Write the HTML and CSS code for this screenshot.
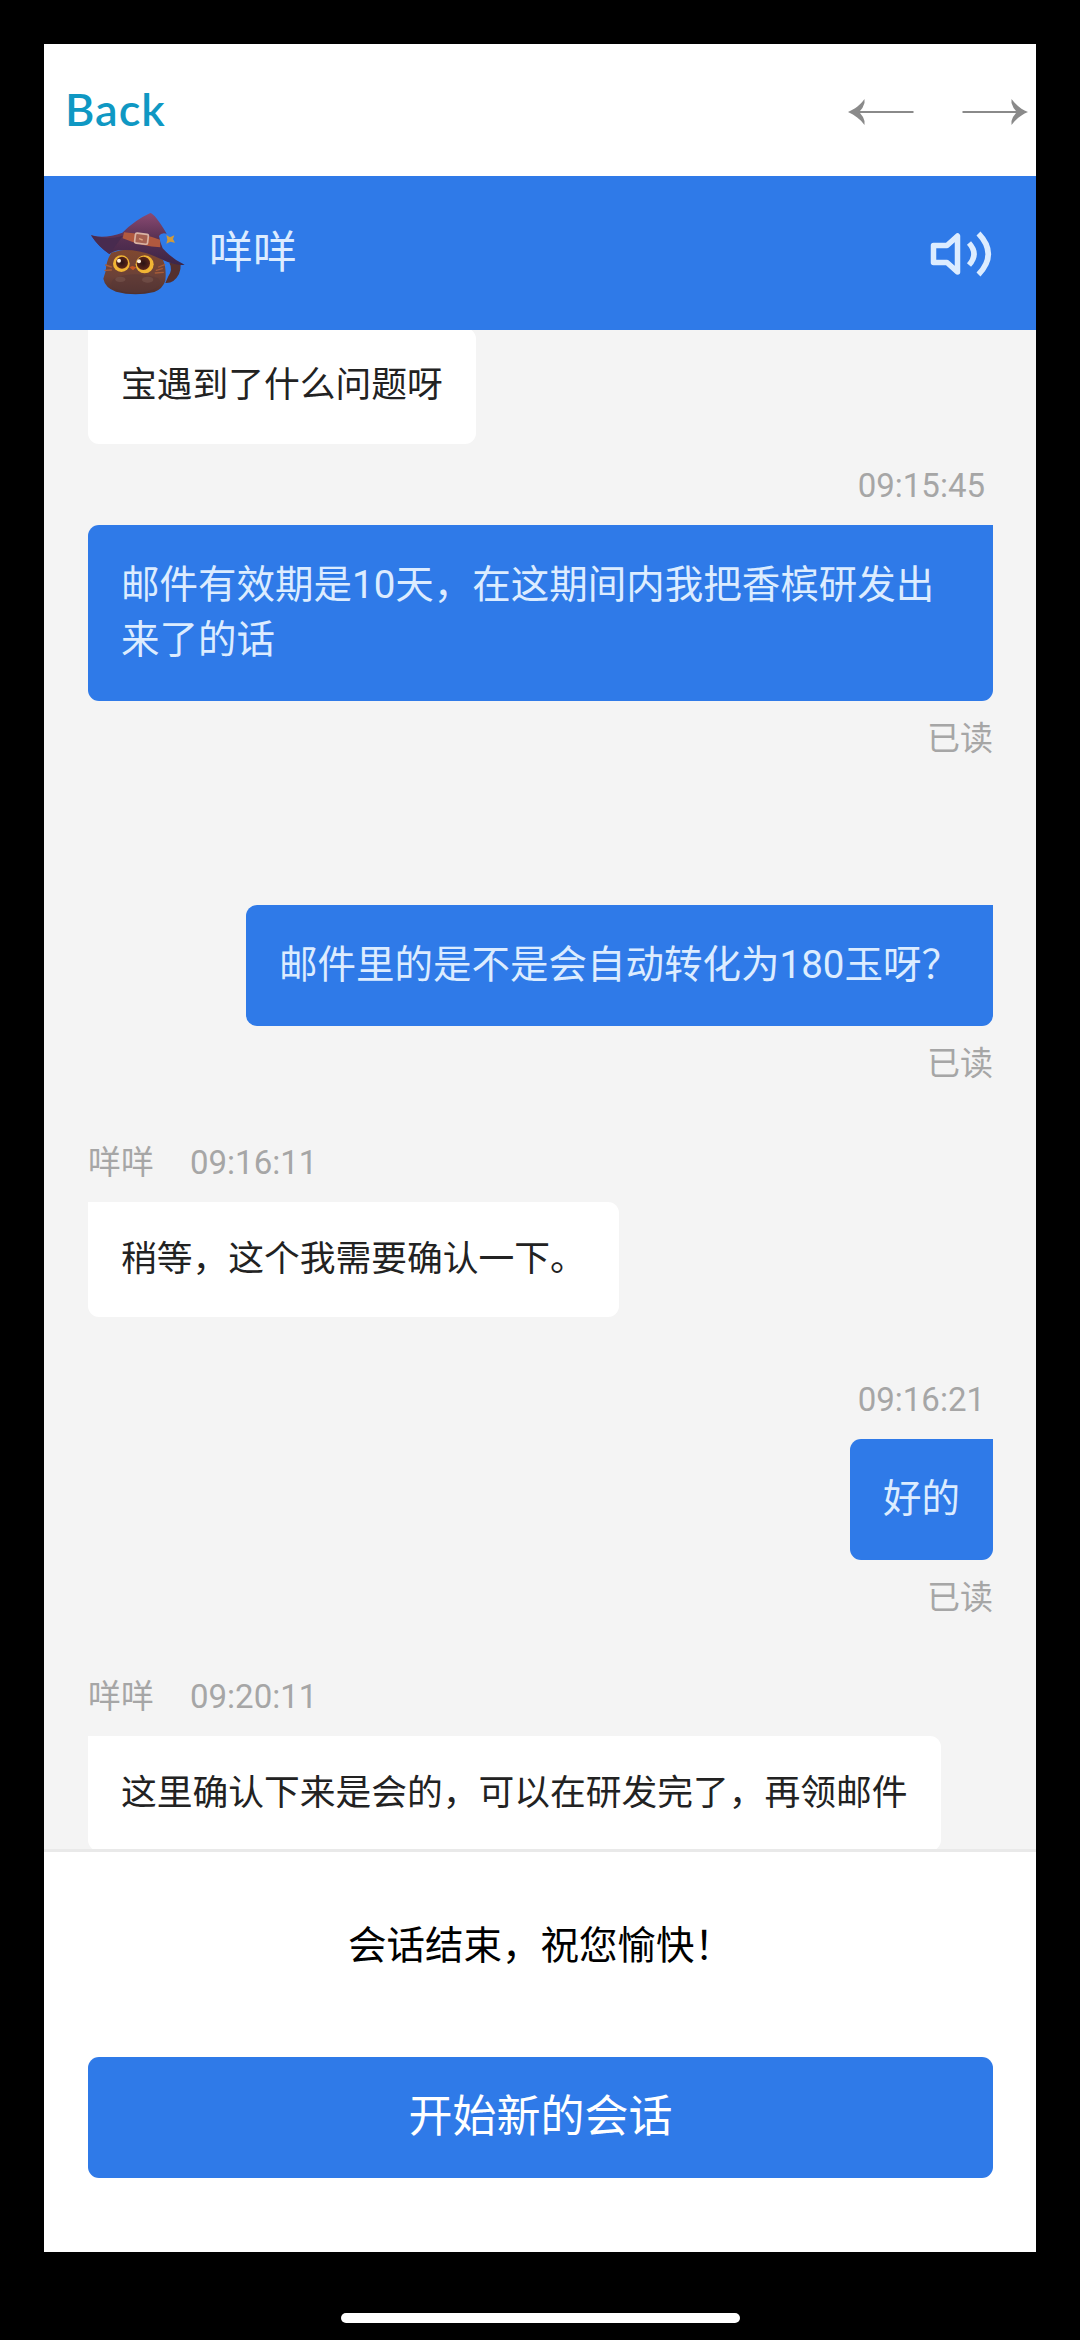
FILE: index.html
```html
<!DOCTYPE html>
<html lang="zh-CN">

<head>
    <meta charset="UTF-8">
    <meta name="viewport" content="width=device-width, initial-scale=1.0">
    <title>咩咩</title>
    <link rel="stylesheet" href="styles.css">
</head>

<body>
    <div class="panel">
        <nav class="topbar">
            <a class="back">Back</a>
            <div class="arrows">
                <svg width="66" height="26" viewBox="0 0 66 26">
                    <path d="M0 13C7 10 12 6 16.500 0V4Q15 9 12 12H65.500V14H12Q15 17 16.500 22V26C12 20 7 16 0 13Z" />
                </svg>
                <svg width="66" height="26" viewBox="0 0 66 26">
                    <path d="M66 13C59 10 54 6 49.500 0V4Q51 9 54 12H.5V14H54Q51 17 49.500 22V26C54 20 59 16 66 13Z" />
                </svg>
            </div>
        </nav>

        <header class="agent">
            <svg class="avatar" viewBox="24 36 300 252">
                <defs>
                    <linearGradient id="hat" x1="0" y1="0" x2="0" y2="1">
                        <stop offset="0" stop-color="#8a4a72" />
                        <stop offset=".5" stop-color="#573052" />
                        <stop offset="1" stop-color="#3c2547" />
                    </linearGradient>
                    <linearGradient id="fur" x1="0" y1="0" x2="0" y2="1">
                        <stop offset="0" stop-color="#80482f" />
                        <stop offset=".6" stop-color="#6b4138" />
                        <stop offset="1" stop-color="#4e302f" />
                    </linearGradient>
                    <radialGradient id="pupil">
                        <stop offset="0" stop-color="#2a1315" />
                        <stop offset="1" stop-color="#5b2619" />
                    </radialGradient>
                </defs>
                <!-- tail -->
                <path d="M268 188Q279 208 265 229L256 249Q282 251 297 222Q303 207 302 192Z" fill="#54302f" />
                <!-- head -->
                <path d="M94 158Q79 181 77 213L70 236Q75 263 108 275Q164 290 223 276Q248 266 256 242Q260 205 249 180Q176 132 94 158Z" fill="url(#fur)" />
                <path d="M103 236Q161 210 235 235Q246 247 236 257Q209 279 164 279Q118 278 98 258Q88 247 103 236Z" fill="#5a3936" opacity=".55" />
                <ellipse cx="121" cy="238" rx="15" ry="8" fill="#806056" opacity=".45" />
                <ellipse cx="203" cy="239" rx="17" ry="9" fill="#806056" opacity=".45" />
                <g fill="none" stroke="#a75c38" stroke-width="4" stroke-linecap="round">
                    <path d="M77 195L94 201M75 211L94 210M229 211L247 206M226 219L250 217M254 194L236 201" />
                </g>
                <!-- eyes -->
                <circle cx="124" cy="191" r="25" fill="#f2b534" />
                <circle cx="126" cy="188" r="18" fill="url(#pupil)" />
                <circle cx="194" cy="193" r="27" fill="#f2b534" />
                <circle cx="190" cy="190" r="20" fill="url(#pupil)" />
                <circle cx="117" cy="182" r="6" fill="#fff1dc" />
                <circle cx="177" cy="184" r="6" fill="#fff1dc" />
                <path d="M148 202L157 198L169 202L159 211Z" fill="#c75623" />
                <!-- hat -->
                <path d="M33 106Q76 117 127 98Q165 60 211 39Q225 42 260 101Q243 97 237 108Q240 128 248 145Q276 177 314 194Q288 199 244 178Q179 145 115 151Q96 156 88 162Q55 140 33 106Z" fill="url(#hat)" />
                <path d="M33 106Q76 122 128 108Q108 136 88 162Q55 140 33 106Z" fill="#482b4f" />
                <path d="M132 97Q190 101 240 119L241 142Q190 141 128 115Z" fill="#b1593f" />
                <rect x="165" y="101" width="39" height="30" rx="5" transform="rotate(7 184 116)" fill="#a56051" stroke="#d9b3a4" stroke-width="5" />
                <path d="M177 116L188 120" stroke="#dda382" stroke-width="4" />
                <path d="M259 105L270 112L283 106L279 117L285 128L271 125L259 131L262 119Z" fill="#d09b3c" />
            </svg>
            <span class="agent-name">咩咩</span>
            <svg class="speaker" width="62" height="48" viewBox="0 0 62 48">
                <path d="M3.500 15.500H17L27.500 6V42L17 32.500H3.500Z" />
                <path d="M39 13Q49 24 39 35M48.500 3.500Q68 24 48.500 44.500" />
            </svg>
        </header>

        <main class="chat">
            <div class="msg msg-first">
                <div class="bubble">宝遇到了什么问题呀</div>
            </div>

            <div class="msg mine">
                <div class="meta"><span>09:15:45</span></div>
                <div class="bubble">邮件有效期是10天，在这期间内我把香槟研发出来了的话</div>
                <div class="status">已读</div>
            </div>

            <div class="msg mine no-meta">
                <div class="bubble">邮件里的是不是会自动转化为180玉呀？</div>
                <div class="status">已读</div>
            </div>

            <div class="msg">
                <div class="meta"><span>咩咩</span><span>09:16:11</span></div>
                <div class="bubble">稍等，这个我需要确认一下。</div>
            </div>

            <div class="msg mine reply">
                <div class="meta"><span>09:16:21</span></div>
                <div class="bubble">好的</div>
                <div class="status">已读</div>
            </div>

            <div class="msg">
                <div class="meta"><span>咩咩</span><span>09:20:11</span></div>
                <div class="bubble">这里确认下来是会的，可以在研发完了，再领邮件</div>
            </div>
        </main>

        <footer class="ended">
            <p>会话结束，祝您愉快！</p>
            <button>开始新的会话</button>
        </footer>
    </div>
    <div class="home-bar"></div>
</body>

</html>
```
FILE: styles.css
```css
* {
    box-sizing: border-box;
}

body {
    margin: 0;
    height: 2340px;
    padding: 44px 44px 17px;
    display: flex;
    flex-direction: column;
    background: #000;
    font-family: Roboto, "Noto Sans CJK SC", sans-serif;
    overflow: hidden;
}

.panel {
    height: 2208px;
    display: flex;
    flex-direction: column;
    background: #fff;
}

/* top bar */

.topbar {
    height: 132px;
    flex: none;
    display: flex;
    align-items: center;
    justify-content: space-between;
    padding: 3px 8px 0 21px;
}

.back {
    margin-bottom: 6px;
    font-family: Lato, sans-serif;
    font-size: 45px;
    font-weight: 600;
    letter-spacing: 1px;
    color: #0f98c3;
}

.arrows {
    display: flex;
    gap: 48px;
}

.arrows svg {
    display: block;
    fill: #8a8a8a;
}

.agent {
    height: 154px;
    flex: none;
    display: flex;
    align-items: center;
    padding: 2px 44px 0;
    background: #2f7ae8;
    color: #dcecff;
}

.avatar {
    width: 100px;
    height: 84px;
}

.agent-name {
    flex: 1;
    margin: 0 0 10px 21px;
    font-size: 44px;
}

.speaker {
    fill: none;
    stroke: #dcecff;
    stroke-width: 5.500;
    stroke-linejoin: round;
}

/* messages */

.chat {
    height: 1519px;
    flex: none;
    padding: 0 43px 0 44px;
    background: #f4f4f4;
    overflow: hidden;
}

.msg {
    display: flex;
    flex-direction: column;
    align-items: flex-start;
    margin-top: 49px;
}

.mine {
    align-items: flex-end;
}

.msg-first {
    margin-top: -2px;
}

.msg-first + .msg {
    margin-top: 16px;
}

.no-meta {
    margin-top: 142px;
}

.reply {
    margin-top: 56.5px;
}

.meta,
.status {
    height: 50px;
    line-height: 52px;
    font-size: 33px;
    color: #a6a6a6;
}

.meta {
    display: flex;
    gap: 36px;
    margin-bottom: 15px;
}

.mine .meta {
    padding-right: 8px;
}

.status {
    margin-top: 12px;
}

.bubble {
    padding: 33px;
    font-size: 35.75px;
    line-height: 49.5px;
    color: #222;
    background: #fff;
    border-radius: 0 11px 11px 11px;
}

.mine .bubble {
    padding: 32px 33px 34px;
    font-size: 38.5px;
    line-height: 55px;
    color: #dcecff;
    background: #2f7ae8;
    border-radius: 11px 0 11px 11px;
}

/* footer */

.ended {
    flex: 1;
    padding: 66px 43px 0 44px;
    border-top: 3px solid #e9e9e9;
    text-align: center;
}

.ended p {
    margin: 0 0 84px;
    font-size: 38.5px;
    line-height: 55px;
    color: #000;
}

.ended button {
    display: block;
    width: 100%;
    height: 121px;
    padding: 0 0 9px;
    border: 0;
    border-radius: 11px;
    font-family: inherit;
    font-size: 44px;
    color: #fff;
    background: #2f7ae8;
}

.home-bar {
    width: 399px;
    height: 10px;
    margin: auto auto 0;
    border-radius: 5px;
    background: #fff;
}
```
